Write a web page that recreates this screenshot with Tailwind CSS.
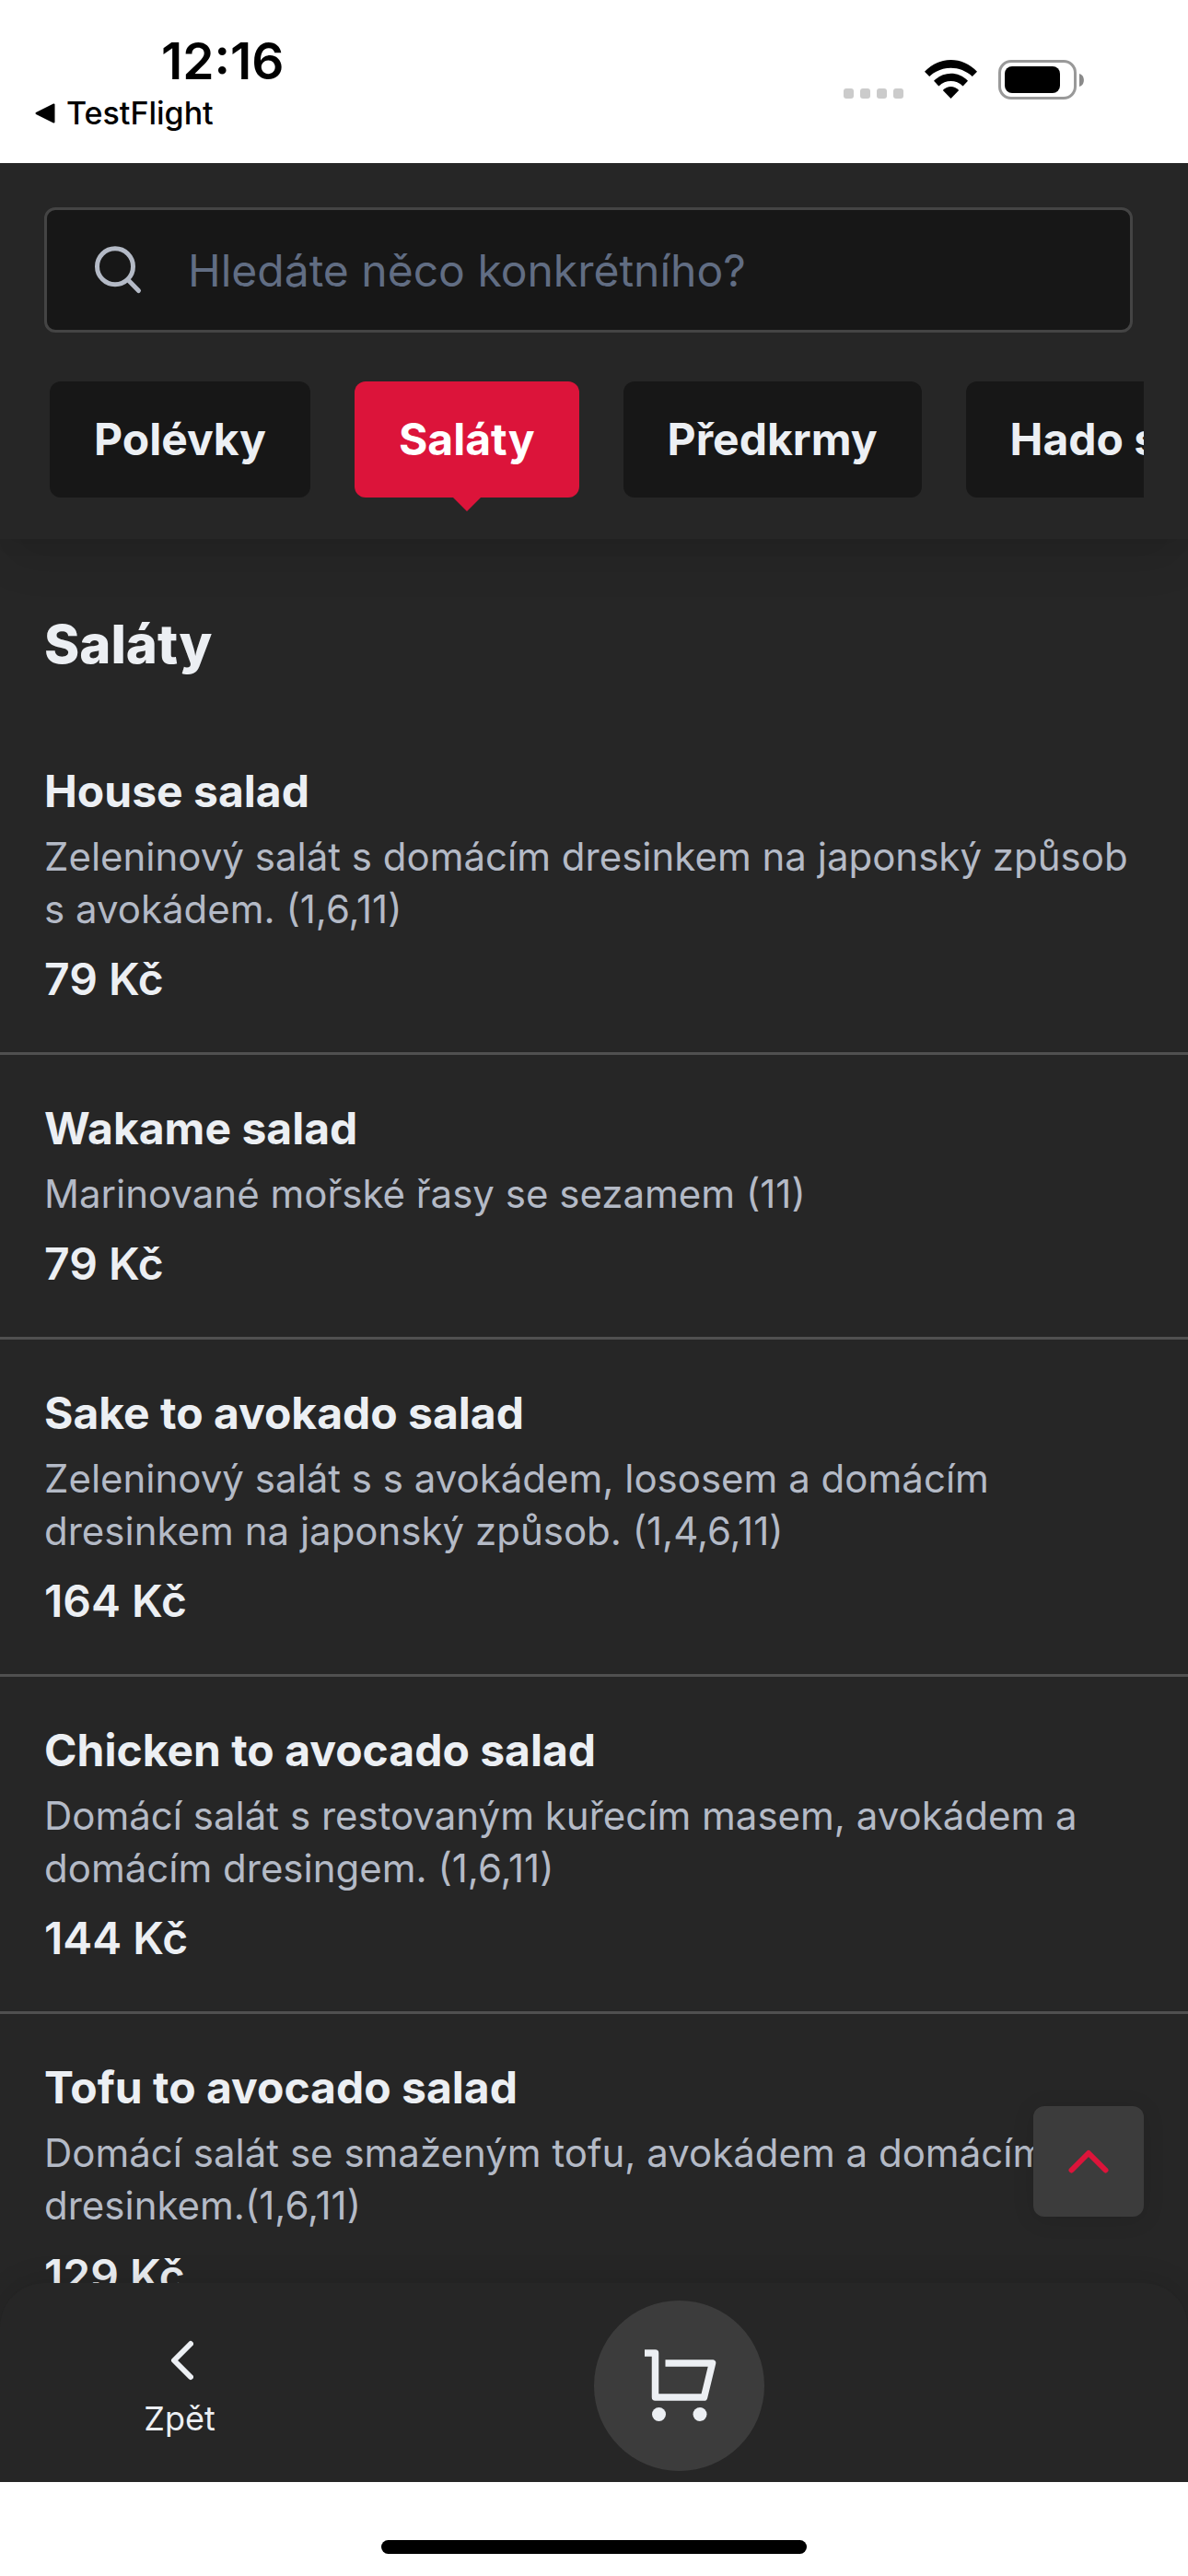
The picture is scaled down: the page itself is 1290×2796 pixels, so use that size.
<!DOCTYPE html>
<html lang="cs">
<head>
    <meta charset="UTF-8">
    <meta name="viewport" content="width=device-width, initial-scale=1.0">
    <title>Saláty</title>
    <script src="https://cdn.jsdelivr.net/npm/@tailwindcss/browser@4"></script>
    <style>
        body { font-family: Inter, 'Noto Sans', sans-serif; }
    </style>
</head>
<body class="bg-white">
<div class="flex flex-col h-screen overflow-hidden">

    <!-- Status bar -->
    <div class="h-[177px] shrink-0 flex justify-between text-black">
        <div class="pl-[38px] pt-[34px]">
            <p class="pl-[137px] text-[55px] leading-[64px] font-semibold">12:16</p>
            <a href="#" class="flex items-center gap-3 text-[34px] leading-[50px] font-medium">
                <svg width="22" height="22" viewBox="0 0 22 22" fill="currentColor" stroke="currentColor" stroke-width="2" stroke-linejoin="round"><path d="M1.500 11 20.500 1.500v19z"/></svg>
                TestFlight
            </a>
        </div>
        <div class="flex items-end h-[108px] pr-[113px]">
            <svg class="mr-[23px] mb-px" width="65" height="11" fill="#cbcbcb">
                <rect width="11" height="11" rx="3"/>
                <rect x="18" width="11" height="11" rx="3"/>
                <rect x="36" width="11" height="11" rx="3"/>
                <rect x="54" width="11" height="11" rx="3"/>
            </svg>
            <svg class="mr-[23px] mb-px" width="57" height="42" viewBox="0 0 57 42">
                <path d="M0 12.700C16-4.200 41-4.200 57 12.700L51.800 18C38.500 5.600 18.500 5.600 5.200 18z"/>
                <path d="M10 22.800C20.500 12.200 36.500 12.200 47 22.800L41.600 28.500C34 21.200 23 21.200 15.400 28.500z"/>
                <path d="M19.800 33C25 27.700 32 27.700 37.200 33L28.500 42z"/>
            </svg>
            <svg width="93" height="43" viewBox="0 0 93 43">
                <rect x="1.500" y="1.500" width="82" height="40" rx="12.500" fill="none" stroke="#999" stroke-width="3"/>
                <rect x="7" y="7" width="60" height="29" rx="8"/>
                <path d="M88 15c6.500 1.500 6.500 12.500 0 14z" fill="#8a8a8a"/>
            </svg>
        </div>
    </div>

    <!-- Search + categories -->
    <header class="relative z-10 shrink-0 bg-[#262626] pt-12 px-12 shadow-[0_30px_45px_-9px_rgba(0,0,0,0.1),0_12px_18px_-6px_rgba(0,0,0,0.05)]">
        <label class="flex items-center h-[136px] mr-3 pl-[47px] bg-[#171717] border-3 border-[#444] rounded-xl">
            <svg class="shrink-0 text-[#b4bac6]" width="60" height="60" viewBox="0 0 24 24" fill="none" stroke="currentColor" stroke-width="2" stroke-linecap="round"><circle cx="10.800" cy="10.500" r="7.800"/><path d="m16.300 16.200 4.700 4.800"/></svg>
            <input type="text" aria-label="Hledat" placeholder="Hledáte něco konkrétního?" class="grow min-w-0 ml-[46px] pt-[2px] bg-transparent text-[48px] text-[#eceff3] placeholder:text-[#616d83] outline-none">
        </label>
        <div class="flex gap-12 mt-[53px] pl-[6px] pb-[45px] overflow-hidden text-[48px] leading-[126px] font-bold whitespace-nowrap text-[#eceff3]">
            <button class="shrink-0 px-12 rounded-xl bg-[#171717]">Polévky</button>
            <button class="relative shrink-0 px-12 rounded-xl bg-[#dc143a] text-white">
                Saláty
                <svg class="absolute top-full left-1/2 -translate-x-1/2" width="30" height="15" fill="#dc143a"><path d="M0 0h30L15 15z"/></svg>
            </button>
            <button class="shrink-0 px-12 rounded-xl bg-[#171717]">Předkrmy</button>
            <button class="shrink-0 px-12 rounded-xl bg-[#171717]">Hado sushi</button>
        </div>
    </header>

    <!-- Menu list -->
    <main class="relative grow min-h-0 overflow-hidden bg-[#262626] text-[#eceff3]">
        <h1 class="px-12 pt-[66px] pb-8 text-[58px] leading-[96px] font-extrabold">Saláty</h1>
        <ul>
            <li class="px-12 pt-12 pb-[47px] border-b-3 border-[#505050]">
                <h2 class="text-[48px] leading-[64px] font-bold">House salad</h2>
                <p class="mt-[10px] mb-4 text-[42px] leading-[57px] text-[#b4bac6]">Zeleninový salát s domácím dresinkem na japonský způsob s avokádem. (1,6,11)</p>
                <p class="text-[48px] leading-[64px] font-semibold">79 Kč</p>
            </li>
            <li class="px-12 pt-12 pb-[47px] border-b-3 border-[#505050]">
                <h2 class="text-[48px] leading-[64px] font-bold">Wakame salad</h2>
                <p class="mt-[10px] mb-4 text-[42px] leading-[57px] text-[#b4bac6]">Marinované mořské řasy se sezamem (11)</p>
                <p class="text-[48px] leading-[64px] font-semibold">79 Kč</p>
            </li>
            <li class="px-12 pt-12 pb-[47px] border-b-3 border-[#505050]">
                <h2 class="text-[48px] leading-[64px] font-bold">Sake to avokado salad</h2>
                <p class="mt-[10px] mb-4 text-[42px] leading-[57px] text-[#b4bac6]">Zeleninový salát s s avokádem, lososem a domácím dresinkem na japonský způsob. (1,4,6,11)</p>
                <p class="text-[48px] leading-[64px] font-semibold">164 Kč</p>
            </li>
            <li class="px-12 pt-12 pb-[47px] border-b-3 border-[#505050]">
                <h2 class="text-[48px] leading-[64px] font-bold">Chicken to avocado salad</h2>
                <p class="mt-[10px] mb-4 text-[42px] leading-[57px] text-[#b4bac6]">Domácí salát s restovaným kuřecím masem, avokádem a domácím dresingem. (1,6,11)</p>
                <p class="text-[48px] leading-[64px] font-semibold">144 Kč</p>
            </li>
            <li class="px-12 pt-12 pb-[47px] border-b-3 border-[#505050]">
                <h2 class="text-[48px] leading-[64px] font-bold">Tofu to avocado salad</h2>
                <p class="mt-[10px] mb-4 text-[42px] leading-[57px] text-[#b4bac6]">Domácí salát se smaženým tofu, avokádem a domácím dresinkem.(1,6,11)</p>
                <p class="text-[48px] leading-[64px] font-semibold">129 Kč</p>
            </li>
        </ul>

        <!-- Scroll to top -->
        <button aria-label="Nahoru" class="absolute right-12 bottom-[72px] size-[120px] flex items-center justify-center rounded-xl bg-[#3c3c3c] shadow-[0_3px_24px_rgba(0,0,0,0.1)]">
            <svg width="44" height="26" viewBox="0 0 44 26" fill="none" stroke="#dc143a" stroke-width="6" stroke-linecap="round" stroke-linejoin="round"><path d="M3.500 22.500 22 4l18.500 18.500"/></svg>
        </button>
    </main>

    <!-- Bottom navigation -->
    <div class="relative z-10 shrink-0 bg-[#262626]">
        <nav class="h-[216px] grid grid-cols-2 items-center bg-[#262626] rounded-t-[48px] text-[#eceff3] shadow-[0_-3px_30px_rgba(0,0,0,0.12)]">
            <button class="w-[390px] flex flex-col items-center gap-[14px] pt-5 text-[36px] leading-[54px]">
                <svg width="30" height="44" viewBox="0 0 30 44" fill="none" stroke="currentColor" stroke-width="6" stroke-linecap="round" stroke-linejoin="round"><path d="M27 4 9 22l18 18"/></svg>
                Zpět
            </button>
            <button aria-label="Košík" class="size-[185px] mt-[6px] flex items-center justify-center rounded-full bg-[#3c3c3c]">
                <svg width="76" height="78" viewBox="0 0 76 78" fill="none" stroke="currentColor" stroke-width="7.500" stroke-linejoin="round" class="overflow-visible">
                    <path d="M0 4h11.500v48h53l9-37H22.500"/>
                    <g fill="currentColor" stroke="none"><circle cx="15.500" cy="70.500" r="7.500"/><circle cx="60" cy="70.500" r="7.500"/></g>
                </svg>
            </button>
        </nav>
    </div>

    <!-- Home indicator -->
    <div class="relative z-20 h-[102px] shrink-0 flex justify-center pt-[63px] bg-white">
        <div class="w-[462px] h-[15px] rounded-full bg-black"></div>
    </div>
</div>
</body>
</html>
